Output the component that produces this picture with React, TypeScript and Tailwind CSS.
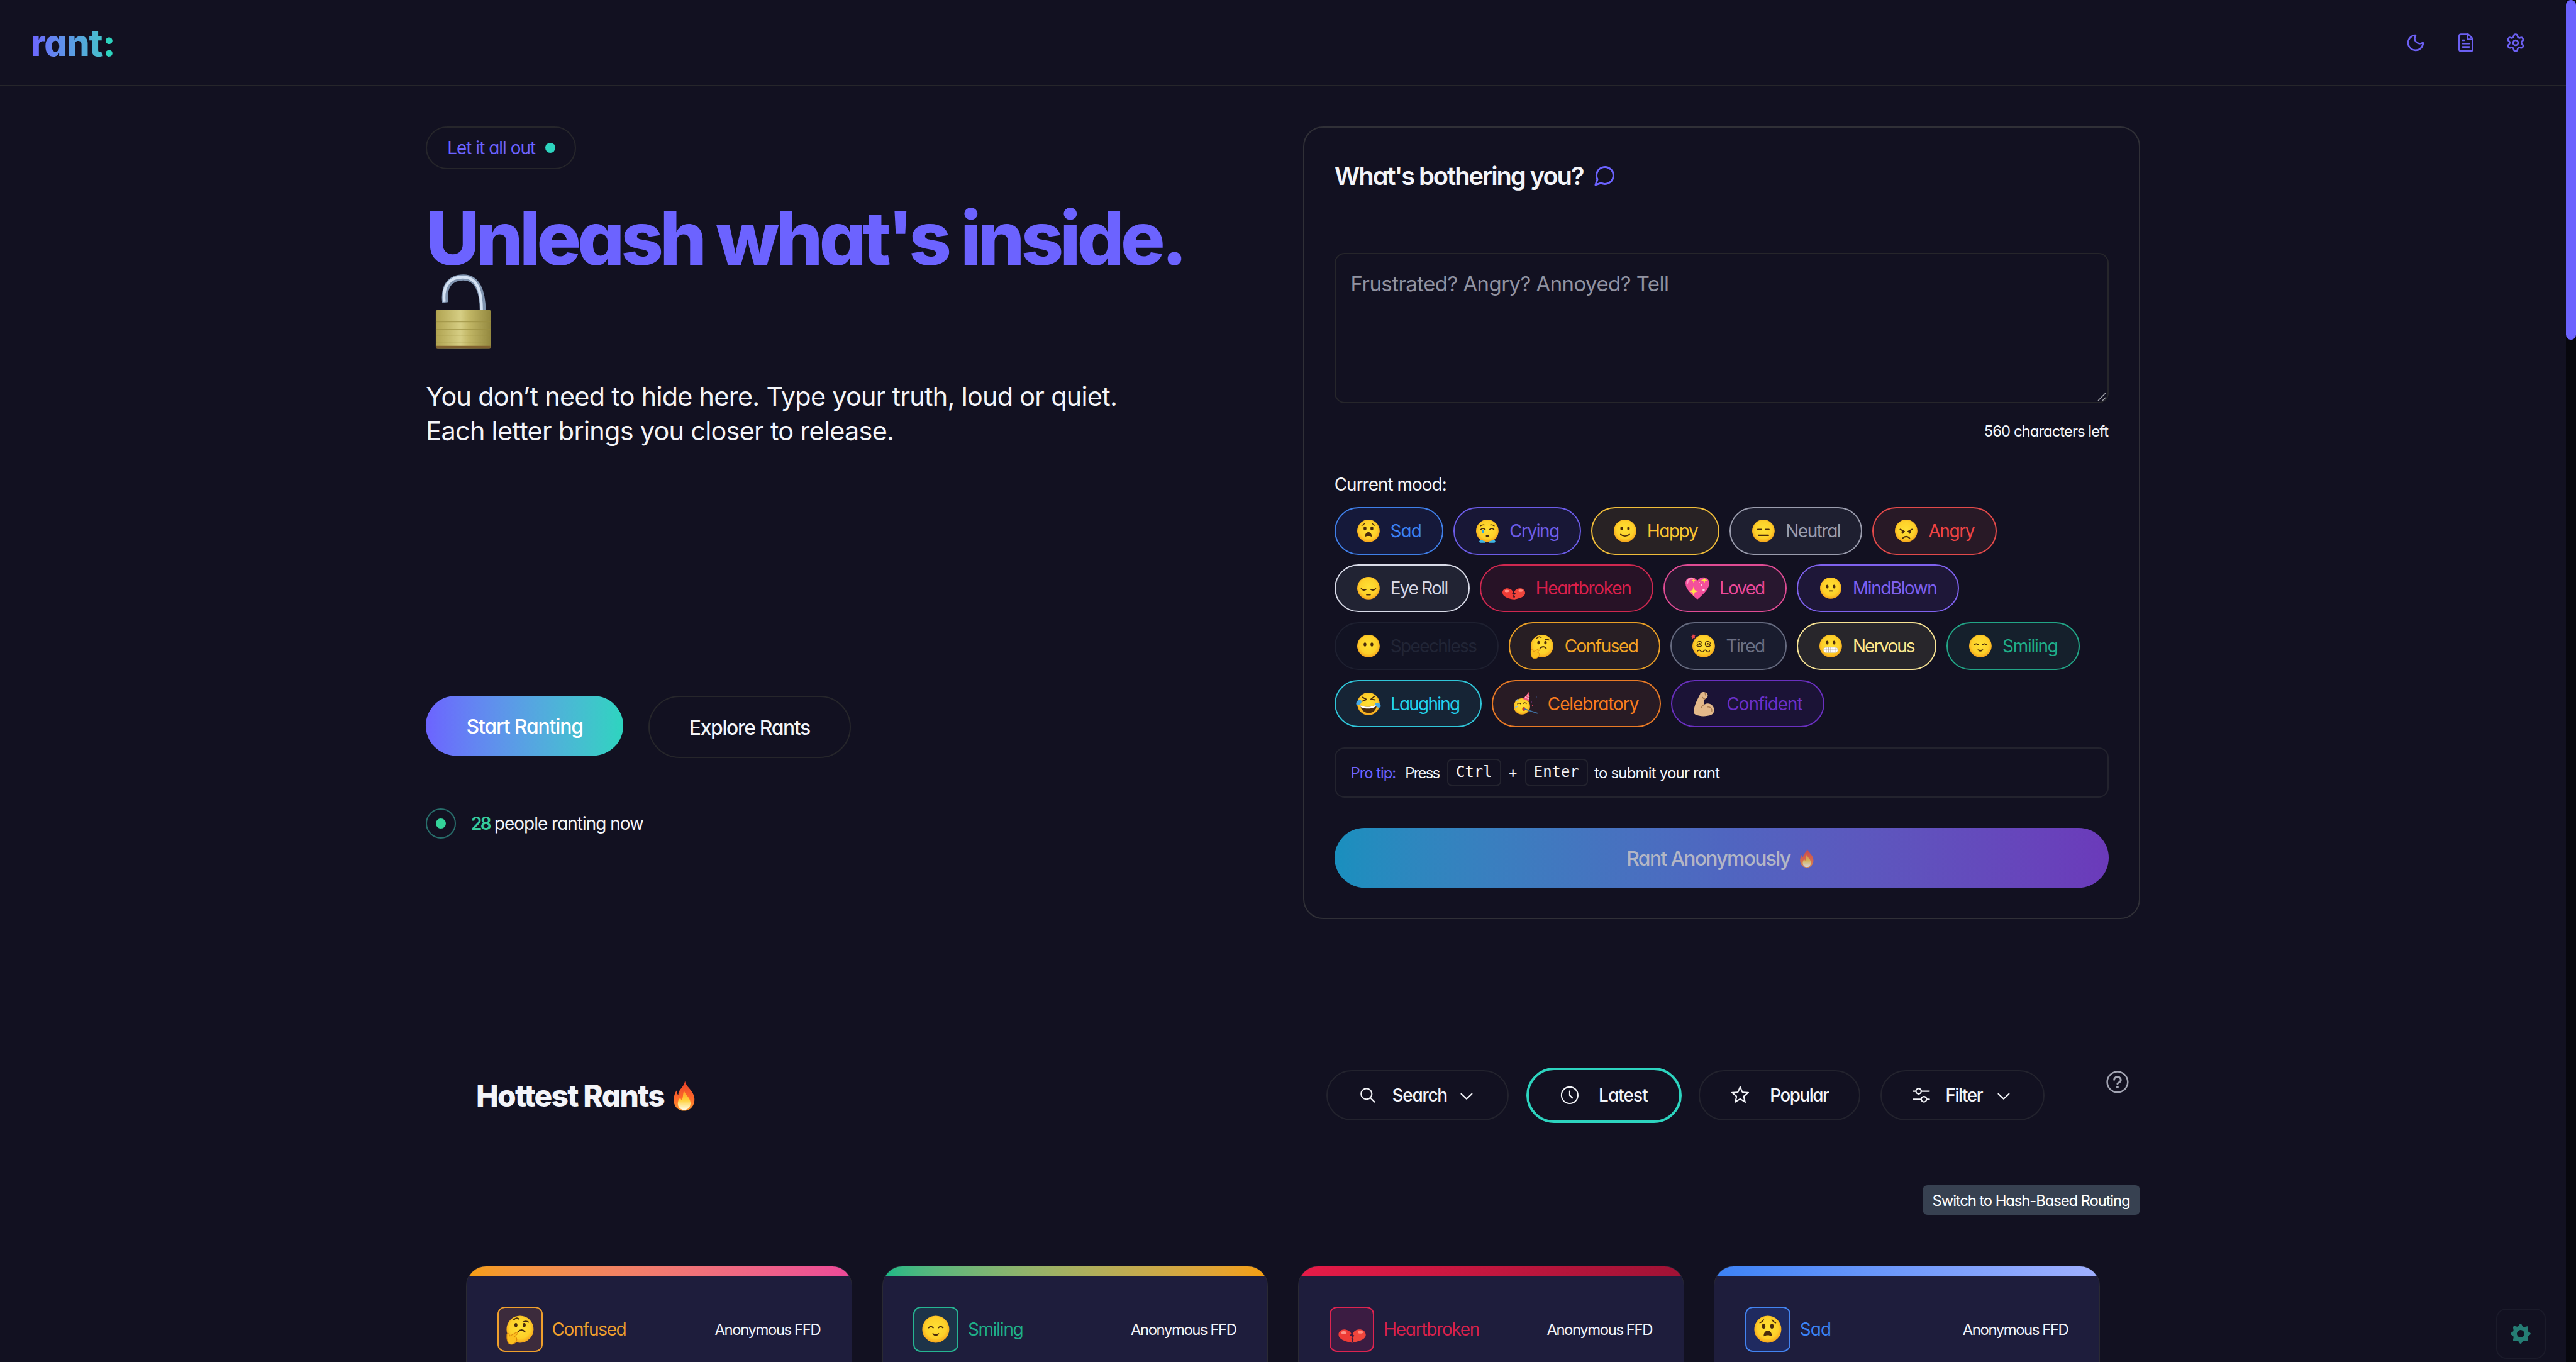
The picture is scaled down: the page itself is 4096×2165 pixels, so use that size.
import { useLayoutEffect, useRef, type ReactNode } from "react";
import { FileText, Moon, Settings } from "lucide-react";
import {
  RxChevronDown,
  RxClock,
  RxMagnifyingGlass,
  RxMixerHorizontal,
  RxQuestionMarkCircled,
  RxStar,
} from "react-icons/rx";

/** Single-line label whose tracking is adjusted so that it fills a given width. */
function Label({ w, className = "", children }: { w: number; className?: string; children: string }) {
  const ref = useRef<HTMLSpanElement>(null);
  useLayoutEffect(() => {
    const el = ref.current;
    if (!el) return;
    el.style.letterSpacing = "0px";
    el.style.width = "max-content";
    const natural = el.offsetWidth;
    el.style.letterSpacing = `${(w - natural) / (children.length - 0.5)}px`;
    el.style.width = `${w}px`;
  }, [w, children]);
  return (
    <span ref={ref} className={`inline-block shrink-0 translate-y-[1.5px] whitespace-pre ${className}`}>
      {children}
    </span>
  );
}

const INK = "#4a2b0c";

function Eyes({ y = 17, dx = 5.5, rx = 2, ry = 3 }: { y?: number; dx?: number; rx?: number; ry?: number }) {
  return (
    <g fill={INK}>
      <ellipse cx={20 - dx} cy={y} rx={rx} ry={ry} />
      <ellipse cx={20 + dx} cy={y} rx={rx} ry={ry} />
    </g>
  );
}

function Stroke({ d, width = 1.7, color = INK }: { d: string; width?: number; color?: string }) {
  return <path d={d} fill="none" stroke={color} strokeWidth={width} strokeLinecap="round" strokeLinejoin="round" />;
}

const flame = (
  <g>
    <path
      d="M21 1c1 7 9 11 11.5 19C35 29 30 39 20 39S5 30 7 21c.6-3 2-6 3.500-8 .2 3 .6 5 2 6C12 12 20 9 21 1Z"
      fill="url(#flameOuter)"
    />
    <path d="M20 13c0 5 7 8 8 15 .8 6-3 10-8 10s-9-4-8-10c.4-3 2-4 3-6 .6 2 1 3 2 3 2-3 1-8 3-12Z" fill="url(#flameInner)" />
  </g>
);

const faces: Record<string, ReactNode> = {
  sad: (
    <>
      <Stroke d="M9.500 11.500q3-1 5-4M30.500 11.500q-3-1-5-4" width={1.300} />
      <Eyes y={16} rx={2.300} ry={3.200} />
      <path d="M14.500 29.500c0-5 2.500-7.500 5.500-7.500s5.500 2.500 5.500 7.500c-3-2-8-2-11 0Z" fill={INK} />
    </>
  ),
  crying: (
    <>
      <Stroke d="M9 12q3-2 6-1.500M31 12q-3-2-6-1.500" width={1.500} />
      <Stroke d="M9.500 18q3.500-3.500 7 0M23.500 18q3.500-3.500 7 0" />
      <ellipse cx="20" cy="28" rx="2.600" ry="1.400" fill={INK} />
      <path d="M13 18c3 3 2 5 0 5s-3-2 0-5Z" fill="#2aa7e8" />
      <path d="M7 37c1-4 6-3 7-.5 1.500-1 4 .5 3 2.500H9c-1 0-2-1-2-2ZM33 37c-1-4-6-3-7-.5-1.500-1-4 .5-3 2.500h8c1 0 2-1 2-2Z" fill="#3fb6e6" />
    </>
  ),
  happy: (
    <>
      <Eyes y={16} />
      <Stroke d="M13 25.500q7 5.500 14 0" width={1.900} />
    </>
  ),
  neutral: (
    <>
      <Stroke d="M11 17.500h6M23 17.500h6" width={2} />
      <Stroke d="M12 27h16" width={2.200} />
    </>
  ),
  angry: (
    <>
      <Stroke d="M10.500 17.500l6.500 3.500M29.500 17.500l-6.500 3.500" width={2} />
      <Eyes y={22} rx={1.900} ry={2.500} />
      <Stroke d="M14.500 31.500q5.500-5 11 0" width={2} />
    </>
  ),
  eyeroll: (
    <>
      <Stroke d="M8.500 21q3.500 3.500 7.500 1M31.500 21q-3.500 3.500-7.500 1" width={1.900} />
      <Stroke d="M17.500 30.500h5" width={2.400} />
    </>
  ),
  mindblown: (
    <>
      <Eyes y={17.500} />
      <Stroke d="M18.500 24.500h4" width={1.700} />
    </>
  ),
  speechless: <Eyes y={17.500} rx={2.200} ry={3.200} />,
  confused: (
    <>
      <Stroke d="M11.500 7.500q4.500-4 7-1M25 10q3.500-1.500 6 .5" width={1.600} />
      <Eyes y={14.500} rx={2} ry={2.800} />
      <Stroke d="M17.500 23q5-4 9 .5" width={1.800} />
      <path
        d="M2.500 27c0-1.500 2-2 3-.3l1 2.300 8-4.500c1.800-.8 3 1 1.600 2.200L12.500 30c3 0 4 3 2.500 6-1.500 3.500-6 5-9 3.500S2 34 2.500 27Z"
        fill="#fcc01f"
        stroke="#dd8b0e"
        strokeWidth=".9"
      />
    </>
  ),
  tired: (
    <>
      <Stroke d="M12.500 16q1.500-1 2 .5t-2 1.800-3-2.300 3.500-3.300 4.500 3.500-3.500 4.500-5.500-2" width={1.200} />
      <Stroke d="M27.500 16q-1.500-1-2 .5t2 1.800 3-2.300-3.500-3.300-4.500 3.500 3.500 4.500 5.500-2" width={1.200} />
      <Stroke d="M10.500 28q2.400-3 4.800 0t4.800 0 4.800 0 4.600 0" width={1.600} />
      <path d="M3 1l1.200 2.200 2.600-.2-1.500 2.200L6.500 7.500 4 6.900 2 8.500l-.1-2.600L-.5 5l2.400-1Z" fill="#e8464b" />
    </>
  ),
  nervous: (
    <>
      <Eyes y={14.500} />
      <rect x="8.500" y="22" width="23" height="8.500" rx="4.200" fill="#fff" stroke="#c9bba6" strokeWidth=".6" />
      <path d="M9 26.200h22M13 22.300v8M16.500 22v8.500M20 22v8.500M23.500 22v8.500M27 22.300v8" stroke="#a89a88" strokeWidth=".8" />
    </>
  ),
  smiling: (
    <>
      <Stroke d="M10.500 18q3-3 6 0M23.500 18q3-3 6 0" />
      <path d="M15.500 25q4.500 2 9 0c-1 5-8 5-9 0Z" fill={INK} />
    </>
  ),
  laughing: (
    <>
      <Stroke d="M10.500 9.500l6.500 3.500-6 2.500M29.500 8l-5.500 4.500 6.500 1" width={2} />
      <path d="M7 22c8 4 18 4 26-2 1 7-4 14.500-12 14.500S7.500 29 7 22Z" fill={INK} />
      <path d="M7.200 22c8 4 18 4 25.700-2l-.3 3.500c-7.500 5-17 5-25 1.500Z" fill="#fff" />
      <path d="M1 17c2-4 8-4 8-1s-3 6-6 6-3-3-2-5ZM39 21c-2-4-8-4-8-1s3 6 6 6 3-3 2-5Z" fill="#46a9e6" />
    </>
  ),
};

function Emoji({ name, className }: { name: string; className: string }) {
  if (name === "heartbroken") {
    return (
      <svg viewBox="0 0 40 40" className={className}>
        <path d="M2 27c0-5 5-7.500 9.500-6.500 4 .8 6.500 3 7.500 5.500l-2 2 3 2-1 2.500 1.500 5.500C13 37 2 34 2 27Z" fill="#ef3b36" />
        <path d="M38 26c-1-5-6-6.500-10.500-5.500-3.500.8-6 3.500-7 6l2.500 2-2.500 3 1.500 2-1.500 4.500c7-1.500 19.500-4 17.500-12Z" fill="#f0453c" />
        <ellipse cx="9" cy="24.500" rx="3.500" ry="2" fill="#ff9186" />
        <ellipse cx="31" cy="24" rx="3.500" ry="1.800" fill="#ff8a7c" />
      </svg>
    );
  }
  if (name === "loved") {
    return (
      <svg viewBox="0 0 40 40" className={className}>
        <path d="M20 38C12 31 1 22 1 12 1 2 14-1 20 8c6-9 19-6 19 4 0 10-11 19-19 26Z" fill="#f4509c" />
        <path d="M4 12c0-5 4-8 8-7" fill="none" stroke="#ff93c5" strokeWidth="2.500" strokeLinecap="round" />
        <path
          d="M14 17l1.800 6.200L21 25l-5.200 1.800L14 33l-1.800-6.200L7 25l5.200-1.800ZM31 2l1.200 4L36 7.500 32.200 9 31 13l-1.200-4L26 7.500 29.800 6ZM14 4l.9 2.600L17.500 8l-2.600 1L14 12l-.9-3L10.500 8l2.600-1.400Z"
          fill="#ffe14a"
        />
        <g fill="#ffd3e6">
          <circle cx="27" cy="15" r="1.200" />
          <circle cx="30" cy="23" r="1.800" />
          <circle cx="23" cy="11" r="1" />
        </g>
      </svg>
    );
  }
  if (name === "celebratory") {
    return (
      <svg viewBox="0 0 40 40" className={className}>
        <circle cx="14" cy="24" r="13" fill="url(#face)" />
        <path d="M16 12L25 1l1 14q-5 .5-10-3Z" fill="#ee5a7c" />
        <path d="M19 9l6 3M22 5l4 4" stroke="#ffc2d0" strokeWidth="1.400" />
        <Stroke d="M7 20q2.500-3 5 0M16 19.500q2.500-3 5 0" width={1.400} />
        <ellipse cx="17" cy="28" rx="2.500" ry="3" fill="#c5322b" />
        <path d="M18 28l21 7" stroke="#3f6f9f" strokeWidth="1.800" />
        <path d="M4 15l3-2 1 3M3 26l4-2" stroke="#8fb6d8" strokeWidth="1.600" fill="none" />
        <circle cx="31" cy="22" r="1" fill="#e8415f" />
        <circle cx="37" cy="9" r=".8" fill="#4477c8" />
        <circle cx="29" cy="17" r=".8" fill="#b34cc8" />
      </svg>
    );
  }
  if (name === "confident") {
    return (
      <svg viewBox="0 0 40 40" className={className}>
        <path
          d="M13 5c1-4 5-4.500 8-3.500 3 .8 5 3 4.500 6-.4 2.500-2 4-4.500 4.500-1.500 3-1.500 6-1 9 5-3.500 11-1.500 14 3 3 5 2 11-3 13.500-7 3-20 3-26-1-2-1.500-2-4-1.500-7C4.500 21 9 13 13 5Z"
          fill="#e3b98a"
        />
        <path d="M20 21c-2 1-4 3-4.500 5M25 25c5-1 8 3 7 7M21 12c-2 0-3-1-3.500-2.500M21 2l1 4" fill="none" stroke="#a97c50" strokeWidth="1.300" strokeLinecap="round" />
      </svg>
    );
  }
  return (
    <svg viewBox="0 0 40 40" className={`overflow-visible ${className}`}>
      <circle cx="20" cy="20" r={name === "mindblown" ? 17 : 18} fill="url(#face)" />
      {faces[name]}
    </svg>
  );
}

type Mood = { name: string; icon: string; pill: string; text: number; tone: string };

const moodRows: Mood[][] = [
  [
    { name: "Sad", icon: "sad", pill: "w-[174px]", text: 50, tone: "border-[#3f7fe8] text-[#3b82f6] bg-[#15193a]" },
    { name: "Crying", icon: "crying", pill: "w-[204px]", text: 80, tone: "border-[#6c5ce7] text-[#6c5ce7] bg-[#181736]" },
    { name: "Happy", icon: "happy", pill: "w-[205px]", text: 81, tone: "border-[#f0bd3a] text-[#fbc531] bg-[#282224]" },
    { name: "Neutral", icon: "neutral", pill: "w-[212px]", text: 88, tone: "border-[#9a9cad] text-[#9a9cad] bg-[#1e1f30]" },
    { name: "Angry", icon: "angry", pill: "w-[198px]", text: 74, tone: "border-[#e24a4a] text-[#ef4444] bg-[#281926]" },
  ],
  [
    { name: "Eye Roll", icon: "eyeroll", pill: "w-[216px]", text: 92, tone: "border-[#d9dbe8] text-[#d6d8e6] bg-[#212333]" },
    { name: "Heartbroken", icon: "heartbroken", pill: "w-[277px]", text: 153, tone: "border-[#cf2850] text-[#d91f4b] bg-[#271226]" },
    { name: "Loved", icon: "loved", pill: "w-[197px]", text: 73, tone: "border-[#e04c94] text-[#ec4899] bg-[#28172f]" },
    { name: "MindBlown", icon: "mindblown", pill: "w-[259px]", text: 135, tone: "border-[#7f62ee] text-[#7d60f0] bg-[#1e1738]" },
  ],
  [
    { name: "Speechless", icon: "speechless", pill: "w-[262px]", text: 138, tone: "border-[#1e2030] text-[#212536] bg-[#121323]" },
    { name: "Confused", icon: "confused", pill: "w-[242px]", text: 118, tone: "border-[#e89e26] text-[#f5a524] bg-[#271e23]" },
    { name: "Tired", icon: "tired", pill: "w-[186px]", text: 62, tone: "border-[#666b80] text-[#6b7085] bg-[#191c2e]" },
    { name: "Nervous", icon: "nervous", pill: "w-[223px]", text: 99, tone: "border-[#f7e394] text-[#fde68a] bg-[#28262b]" },
    { name: "Smiling", icon: "smiling", pill: "w-[213px]", text: 89, tone: "border-[#22a586] text-[#1fae88] bg-[#15202c]" },
  ],
  [
    { name: "Laughing", icon: "laughing", pill: "w-[235px]", text: 111, tone: "border-[#30c6d9] text-[#22d3ee] bg-[#162435]" },
    { name: "Celebratory", icon: "celebratory", pill: "w-[270px]", text: 146, tone: "border-[#e87a26] text-[#f97b1e] bg-[#281b24]" },
    { name: "Confident", icon: "confident", pill: "w-[245px]", text: 121, tone: "border-[#6a30c0] text-[#6a2fc8] bg-[#1b1336]" },
  ],
];

const rants = [
  { name: "Confused", icon: "confused", w: 119, bar: "from-[#f59e0b] to-[#ec4899]", box: "border-[#f0a02c] bg-[#3c2b3c]", text: "text-[#f0a02c]" },
  { name: "Smiling", icon: "smiling", w: 89, bar: "from-[#12b886] to-[#f59e0b]", box: "border-[#26b592] bg-[#1d3349]", text: "text-[#1fae88]" },
  { name: "Heartbroken", icon: "heartbroken", w: 153, bar: "from-[#e61b48] to-[#a01235]", box: "border-[#dd2450] bg-[#3b1c42]", text: "text-[#d9214c]" },
  { name: "Sad", icon: "sad", w: 50, bar: "from-[#3b82f6] to-[#a0b0ff]", box: "border-[#4384f0] bg-[#1f2a60]", text: "text-[#3b82f6]" },
];

function Header() {
  return (
    <header className="flex h-[138px] items-center border-b-[2.1px] border-[#26262b] pl-[49px] pr-[64px]">
      <div className="flex text-[58px] leading-[68px] font-extrabold">
        <Label w={115} className="bg-linear-to-r from-[#6c63ff] to-[#45bfcb] bg-clip-text text-transparent">
          rant
        </Label>
        <Label w={22} className="text-[#2dd4bf]">:</Label>
      </div>
      <nav className="ml-auto flex gap-12 text-[#6c60f2]">
        <Moon className="size-8" />
        <FileText className="size-8" />
        <Settings className="size-8" />
      </nav>
    </header>
  );
}

function Intro() {
  return (
    <div className="flex w-[1400px] flex-col items-start">
      <div className="flex h-[68px] w-[240px] items-center gap-[15px] rounded-full border-[2.1px] border-[#26262b] pl-8 text-[28px] text-[#6c63ff]">
        <Label w={141}>Let it all out</Label>
        <span className="size-4 rounded-full bg-[#2dd4bf]" />
      </div>
      <h1 className="mt-[49px] h-[121px] text-[118px] leading-[120px] font-extrabold text-[#6c63ff]">
        <Label w={1213}>Unleash what's inside.</Label>
      </h1>
      <svg viewBox="0 0 104 120" className="-mt-[2px] h-[120px] w-[104px]">
        <path d="M31 45C28 20 38 5 60 5s31 22 31 54" fill="none" stroke="#8195b0" strokeWidth="9.500" />
        <path d="M29.500 44C27 19 37 4.500 59 4.500c23 0 30 21 30 54" fill="none" stroke="#d5e2f3" strokeWidth="4.500" />
        <rect x="16" y="57" width="88" height="61" rx="3" fill="url(#brass)" />
        <path d="M16 76h88M16 88h88M16 97h88M16 108h88" stroke="#9c9042" strokeWidth="1.200" opacity=".7" />
        <path d="M17 116h86" stroke="#80602f" strokeWidth="3.500" />
      </svg>
      <p className="mt-[46px] flex flex-col items-start text-[41.500px] leading-[56px] text-[#f3f4f8] [font-feature-settings:normal] [font-variation-settings:'opsz'_14]">
        <Label w={1104}>You don’t need to hide here. Type your truth, loud or quiet.</Label>
        <Label w={747}>Each letter brings you closer to release.</Label>
      </p>
      <div className="mt-[394px] flex h-[100px] items-start gap-10 text-[32px] font-medium">
        <button className="flex h-24 w-[315px] items-center justify-center rounded-full bg-linear-to-r from-[#6c63ff] to-[#2dd4bf] text-white">
          <Label w={187}>Start Ranting</Label>
        </button>
        <button className="flex h-[100px] w-[323px] items-center justify-center rounded-full border-[2.1px] border-[#26262b] text-[#f3f4f8]">
          <Label w={193}>Explore Rants</Label>
        </button>
      </div>
      <div className="mt-20 flex h-12 items-center text-[28px] text-[#f3f4f8]">
        <span className="flex size-12 items-center justify-center rounded-full border-[2.1px] border-[#286e6b]">
          <span className="size-4 rounded-full bg-[#34d399]" />
        </span>
        <Label w={31} className="ml-6 font-semibold text-[#36cb9c]">28</Label>
        <Label w={238} className="ml-[6px]">people ranting now</Label>
      </div>
    </div>
  );
}

function Composer() {
  return (
    <section className="flex h-[1265px] w-[1336px] flex-col rounded-[32px] border-[2.1px] border-[#303037] p-12">
      <h2 className="flex h-14 items-center gap-4 text-[40px] leading-[56px] font-semibold text-[#f3f4f8]">
        <Label w={398}>What's bothering you?</Label>
        <svg viewBox="0 0 24 24" className="size-9 text-[#6c63ff]" fill="none" stroke="currentColor" strokeWidth="2" strokeLinecap="round" strokeLinejoin="round">
          <path d="M7.900 20A9 9 0 1 0 4 16.100L2 22Z" />
        </svg>
      </h2>
      <div className="mt-24 flex h-[240px] justify-between rounded-2xl border-[2.1px] border-[#26262b] pt-[23px] pr-[2px] pl-6 text-[33px] leading-[48px] text-[#9193a1] [font-feature-settings:normal] [font-variation-settings:'opsz'_14]">
        <Label w={508}>Frustrated? Angry? Annoyed? Tell</Label>
        <svg viewBox="0 0 14 14" className="mb-[2px] size-[14px] self-end" stroke="#a5a5ad" strokeWidth="1.500">
          <path d="M1 13L13 1M8 13L13 8" />
        </svg>
      </div>
      <div className="mt-7 flex h-8 justify-end text-2xl leading-8 text-[#f3f4f8]">
        <Label w={199}>560 characters left</Label>
      </div>
      <div className="mt-[49px] h-10 text-[28px] leading-10 text-[#f3f4f8]">
        <Label w={179}>Current mood:</Label>
      </div>
      <div className="mt-4 flex flex-col gap-4">
        {moodRows.map((row, i) => (
          <div key={i} className="flex gap-4">
            {row.map((m) => (
              <button key={m.name} className={`flex h-[76px] items-center gap-[15px] rounded-full border-[2.1px] pl-8 text-[28px] ${m.pill} ${m.tone}`}>
                <Emoji name={m.icon} className="size-10 shrink-0" />
                <Label w={m.text}>{m.name}</Label>
              </button>
            ))}
          </div>
        ))}
      </div>
      <div className="mt-8 flex h-20 items-center rounded-2xl border-[2.1px] border-[#23232e] pl-6 text-2xl text-[#f3f4f8]">
        <Label w={72} className="text-[#6c63ff]">Pro tip:</Label>
        <Label w={55} className="ml-[15px]">Press</Label>
        <kbd className="ml-[12px] flex h-11 w-[86px] items-center justify-center rounded-lg border-[2.1px] border-[#23232e] font-['DejaVu_Sans_Mono',monospace]">Ctrl</kbd>
        <span className="mx-2 w-[22px] text-center">+</span>
        <kbd className="mr-[10px] flex h-11 w-[101px] items-center justify-center rounded-lg border-[2.1px] border-[#23232e] font-['DejaVu_Sans_Mono',monospace]">Enter</kbd>
        <Label w={200}>to submit your rant</Label>
      </div>
      <button className="mt-12 flex h-24 items-center justify-center gap-[10px] rounded-full bg-linear-to-r from-[#198fbe] via-[#4f66c0] to-[#6b3aba] text-[32px] font-medium text-[#b3b6c5]">
        <Label w={262}>Rant Anonymously</Label>
        <svg viewBox="0 0 40 40" className="size-8 opacity-75">{flame}</svg>
      </button>
    </section>
  );
}

function Filters() {
  const pill = "flex h-20 items-center rounded-full border-[2.1px] border-[#23232e]";
  return (
    <div className="mt-[236px] flex h-[88px] items-center pl-[760px] text-[#f3f4f8]">
      <h2 className="flex w-[1357px] items-center gap-[9px] pt-[3px] text-[48px] leading-[64px] font-extrabold">
        <Label w={301}>Hottest Rants</Label>
        <svg viewBox="4 0 32 40" className="h-[50px] w-[44px]">{flame}</svg>
      </h2>
      <div className="flex items-center pt-px text-[28px] font-medium">
        <button className={`${pill} w-[291px] pl-[48px]`}>
          <RxMagnifyingGlass className="size-8" />
          <Label w={88} className="ml-[23px]">Search</Label>
          <RxChevronDown className="ml-[15px] size-8" />
        </button>
        <button className="ml-7 flex h-[88px] w-[248px] items-center rounded-full border-[4.100px] border-[#2dd4bf] pl-[50px]">
          <RxClock className="size-8" />
          <Label w={78} className="ml-[30px]">Latest</Label>
        </button>
        <button className={`${pill} ml-7 w-[258px] pl-[48px]`}>
          <RxStar className="size-8" />
          <Label w={94} className="ml-[31px]">Popular</Label>
        </button>
        <button className={`${pill} ml-8 w-[262px] pl-[47px]`}>
          <RxMixerHorizontal className="size-8" />
          <Label w={60} className="ml-[22px]">Filter</Label>
          <RxChevronDown className="ml-[17px] size-8" />
        </button>
      </div>
      <RxQuestionMarkCircled className="mt-1 ml-24 size-10 self-start text-[#a3a5b3]" />
    </div>
  );
}

export default function App() {
  return (
    <div className="h-screen w-screen overflow-hidden bg-[#121121]">
      <svg className="absolute size-0">
        <defs>
          <radialGradient id="face" cx=".5" cy=".45" r=".55">
            <stop offset="0" stopColor="#ffe035" />
            <stop offset=".7" stopColor="#fdd029" />
            <stop offset="1" stopColor="#f6a31c" />
          </radialGradient>
          <linearGradient id="flameOuter" x1="0" y1="0" x2="0" y2="1">
            <stop offset="0" stopColor="#e8402a" />
            <stop offset=".6" stopColor="#ff6a2a" />
            <stop offset="1" stopColor="#ff9a2e" />
          </linearGradient>
          <linearGradient id="flameInner" x1="0" y1="0" x2="0" y2="1">
            <stop offset="0" stopColor="#ff9a28" />
            <stop offset=".5" stopColor="#ffd13a" />
            <stop offset="1" stopColor="#fffbe8" />
          </linearGradient>
          <linearGradient id="brass" x1="0" y1="0" x2="1" y2="0">
            <stop offset="0" stopColor="#b0a350" />
            <stop offset=".45" stopColor="#d6ce84" />
            <stop offset=".6" stopColor="#c2b766" />
            <stop offset="1" stopColor="#93883f" />
          </linearGradient>
        </defs>
      </svg>
      <div className="flex h-[2174px] w-[4112px] overflow-hidden font-['Inter',sans-serif] [font-feature-settings:'cv11'] [zoom:0.99611]">
        <div className="relative h-full w-[4096px] overflow-hidden">
          <Header />
          <main>
            <div className="flex pt-16 pl-[680px]">
              <Intro />
              <Composer />
            </div>
            <Filters />
            <div className="mt-[100px] flex justify-end pr-[680px]">
              <div className="flex h-12 w-[347px] items-center justify-center rounded-lg bg-[#374151] text-2xl text-white">
                <Label w={316}>Switch to Hash-Based Routing</Label>
              </div>
            </div>
            <div className="mt-[81px] flex gap-12 pl-[744px]">
              {rants.map((r) => (
                <article key={r.name} className="h-[300px] w-[616px] shrink-0 overflow-hidden rounded-[32px] border-[1.100px] border-[#2a2a33] bg-[#1e1d3c]">
                  <div className={`h-4 bg-linear-to-r ${r.bar}`} />
                  <div className="mt-12 flex items-center px-[49px]">
                    <div className={`flex size-[72px] items-center justify-center rounded-xl border-[2.1px] ${r.box}`}>
                      <Emoji name={r.icon} className="size-12" />
                    </div>
                    <Label w={r.w} className={`ml-[15px] text-[28px] ${r.text}`}>{r.name}</Label>
                    <Label w={169} className="ml-auto text-2xl text-[#f3f4f8]">Anonymous FFD</Label>
                  </div>
                </article>
              ))}
            </div>
          </main>
          <button className="absolute top-[2088px] left-[3984px] flex size-20 items-center justify-center rounded-2xl border-[2.1px] border-[#1b1b2a] bg-[#121121]">
            <svg viewBox="0 0 32 32" className="size-8" fill="#257d74">
              <path
                fillRule="evenodd"
                d="M16 0c2 0 2.300 4.500 4.500 5.200S26 3.500 27.500 4.500s-.8 4.800 0 7S32 14 32 16s-3.700 2.500-4.500 4.500 1.500 5.500 0 7-4.800-.9-7 0S18 32 16 32s-2.500-3.700-4.500-4.500-5.500 1.500-7 0 .9-4.800 0-7S0 18 0 16s3.700-2.500 4.500-4.500-1.500-5.500 0-7 4.800.9 7 0S14 0 16 0Zm0 10a6 6 0 1 0 0 12 6 6 0 0 0 0-12Z"
              />
            </svg>
          </button>
        </div>
        <div className="w-4 bg-[#07070d]">
          <div className="h-[542px] rounded-full bg-[#6c63ff]" />
        </div>
      </div>
    </div>
  );
}
